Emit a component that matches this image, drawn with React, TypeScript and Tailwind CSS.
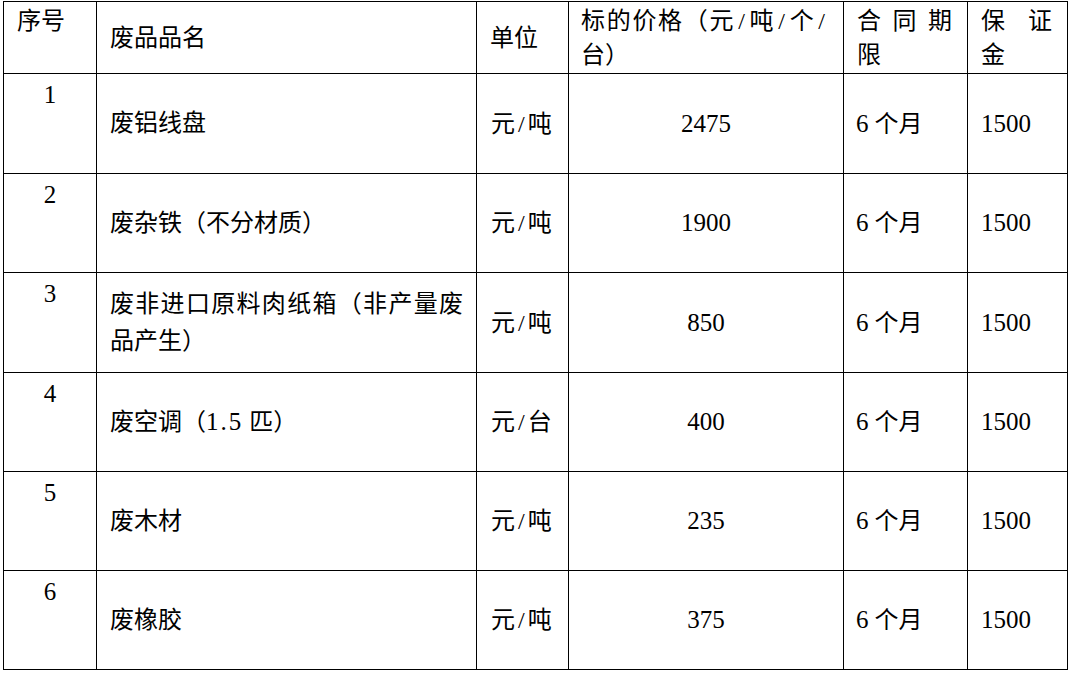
import React from "react";

const rows = [
  { no: "1", name: <>废铝线盘</>, unit: "元/吨", price: "2475" },
  { no: "2", name: <>废杂铁（不分材质）</>, unit: "元/吨", price: "1900" },
  { no: "3", name: <>废非进口原料肉纸箱（非产量废品产生）</>, unit: "元/吨", price: "850" },
  {
    no: "4",
    name: (
      <>
        废空调（<span className="text-[25px] tracking-[2px]">1.5</span> 匹）
      </>
    ),
    unit: "元/台",
    price: "400",
  },
  { no: "5", name: <>废木材</>, unit: "元/吨", price: "235" },
  { no: "6", name: <>废橡胶</>, unit: "元/吨", price: "375" },
];

function Slashy({ text }: { text: string }) {
  const parts = text.split("/");
  return (
    <>
      {parts.map((p, i) => (
        <React.Fragment key={i}>
          {p}
          {i < parts.length - 1 && <span className="px-[3px]">/</span>}
        </React.Fragment>
      ))}
    </>
  );
}

const cell = "border-r border-b border-black min-w-0";

export default function App() {
  return (
    <div className="w-[1072px] h-[673px] bg-white overflow-hidden text-black text-[24px] leading-[34px] font-['Liberation_Serif','Noto_Sans_CJK_SC',serif]">
      <div className="mt-[1px] ml-[3px] w-[1065px] border-l border-t border-black grid grid-cols-[93px_380px_92px_275px_124px_100px] grid-rows-[72px_100px_99px_100px_99px_99px_99px]">
        {/* header */}
        <div className={`${cell} pl-[13px] pt-[2px]`}>序号</div>
        <div className={`${cell} pl-[13px] flex items-center`}>废品品名</div>
        <div className={`${cell} pl-[13px] flex items-center`}>单位</div>
        <div className={`${cell} pl-[12px] pr-[15px] flex flex-col justify-center`}>
          <div className="[text-align-last:justify] text-justify">
            标的价格（元<span className="px-[3px]">/</span>吨<span className="px-[3px]">/</span>个<span className="px-[3px]">/</span>
          </div>
          <div>台）</div>
        </div>
        <div className={`${cell} pl-[13px] pr-[15px] flex flex-col justify-center`}>
          <div className="flex justify-between">
            <span>合</span>
            <span>同</span>
            <span>期</span>
          </div>
          <div>限</div>
        </div>
        <div className={`${cell} pl-[13px] pr-[15px] flex flex-col justify-center`}>
          <div className="flex justify-between">
            <span>保</span>
            <span>证</span>
          </div>
          <div>金</div>
        </div>

        {rows.map((r) => (
          <React.Fragment key={r.no}>
            <div className={`${cell} text-center pt-[4px] text-[25px]`}>{r.no}</div>
            <div className={`${cell} pl-[13px] pr-[13px] flex items-center`}>
              <div className="w-full text-justify leading-[37px]">{r.name}</div>
            </div>
            <div className={`${cell} pl-[14px] flex items-center whitespace-nowrap`}>
              <Slashy text={r.unit} />
            </div>
            <div className={`${cell} flex items-center justify-center text-[25px]`}>{r.price}</div>
            <div className={`${cell} pl-[12px] flex items-center whitespace-nowrap`}>
              <span className="text-[25px]">6</span>&nbsp;个月
            </div>
            <div className={`${cell} pl-[13px] flex items-center text-[25px]`}>1500</div>
          </React.Fragment>
        ))}
      </div>
    </div>
  );
}
